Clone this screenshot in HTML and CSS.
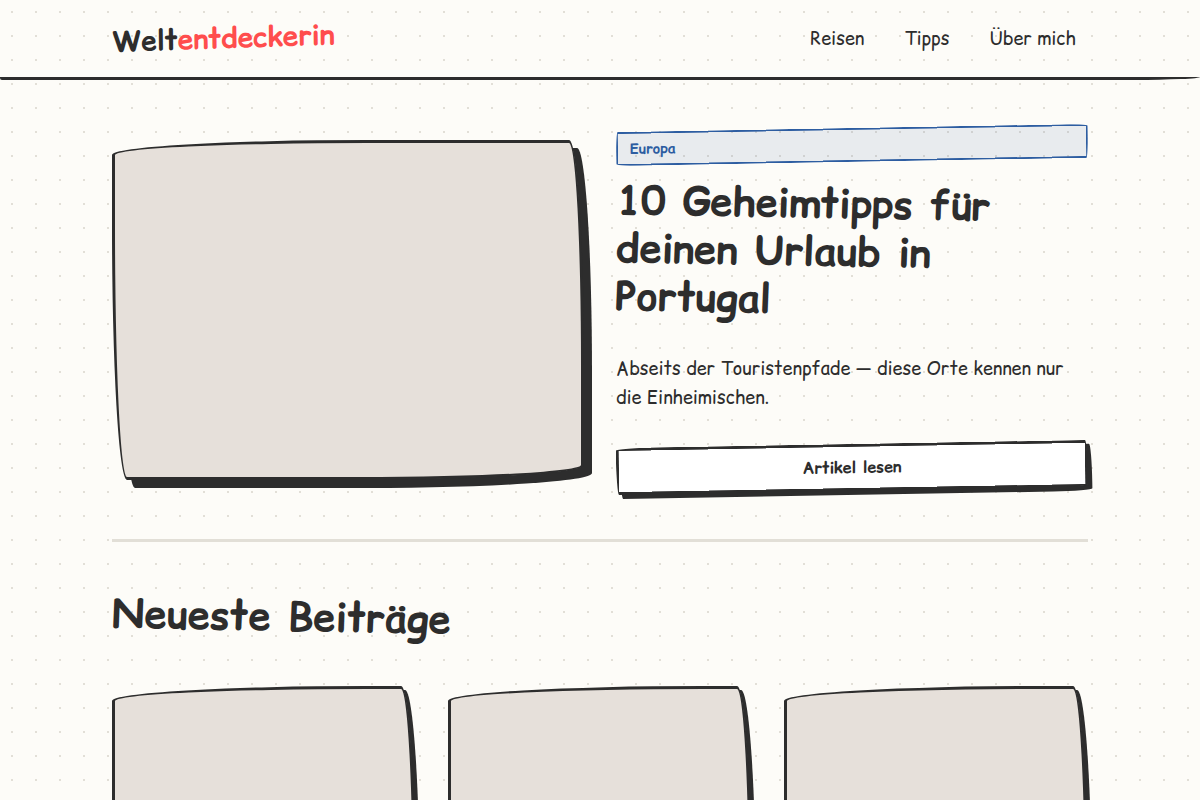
FILE: index.html
```html
<!DOCTYPE html>
<html lang="de">
<head>
    <meta charset="UTF-8">
    <meta name="viewport" content="width=device-width, initial-scale=1.0">
    <title>Weltentdeckerin</title>
    <link rel="stylesheet" href="styles.css">
</head>
<body>
    <header class="header">
        <div class="container header-inner">
            <a href="#" class="logo">Welt<span>entdeckerin</span></a>
            <nav class="nav">
                <a href="#">Reisen</a>
                <a href="#">Tipps</a>
                <a href="#">Über mich</a>
            </nav>
        </div>
    </header>
    <main class="container">
        <section class="hero">
            <div class="hero-image"></div>
            <div class="hero-text">
                <span class="badge">Europa</span>
                <h1>10 Geheimtipps für deinen Urlaub in Portugal</h1>
                <p>Abseits der Touristenpfade — diese Orte kennen nur die Einheimischen.</p>
                <button class="btn" type="button">Artikel lesen</button>
            </div>
        </section>
        <section class="posts">
            <h2>Neueste Beiträge</h2>
            <div class="grid">
                <article class="card"></article>
                <article class="card"></article>
                <article class="card"></article>
            </div>
        </section>
    </main>
</body>
</html>
```
FILE: styles.css
```css
:root {
    --bg: #fdfcf8;
    --ink: #2d2d2d;
    --muted: #e6e0da;
    --line: #e2dfd7;
    --red: #ff4d4d;
    --blue: #2d5da1;
    --wobbly: 255px 15px 225px 15px / 15px 225px 15px 255px;
    --wobbly-alt: 15px 225px 15px 255px / 225px 15px 255px 15px;
}
* {
    box-sizing: border-box;
}
body {
    margin: 0;
    font-family: "Comic Relief", "Comic Sans MS", cursive;
    font-size: 18px;
    line-height: 29px;
    color: var(--ink);
    background-color: var(--bg);
    background-image: radial-gradient(var(--line) 1px, transparent 1px);
    background-size: 24px 24px;
}
.container {
    max-width: 1024px;
    margin: 0 auto;
    padding: 0 24px;
}
.header {
    border-bottom: 3px solid var(--ink);
    border-radius: 0 0 66px 2px / 0 0 3px 2px;
}
.header-inner {
    display: flex;
    justify-content: space-between;
    align-items: center;
    padding-top: 16px;
    padding-bottom: 16px;
}
.logo {
    font-size: 28px;
    line-height: 45px;
    font-weight: 700;
    color: var(--ink);
    text-decoration: none;
    transform: rotate(-2deg);
}
.logo span {
    color: var(--red);
}
.nav {
    display: flex;
    gap: 16px;
}
.nav a {
    padding: 8px 12px;
    color: var(--ink);
    text-decoration: none;
}
.hero {
    display: grid;
    grid-template-columns: 1fr 1fr;
    gap: 32px;
    align-items: center;
    padding: 48px 0;
    border-bottom: 3px solid var(--line);
}
.hero-image {
    height: 340px;
    background: var(--muted);
    border: 3px solid var(--ink);
    border-radius: var(--wobbly);
    box-shadow: 8px 8px 0 var(--ink);
}
.hero-text {
    display: flex;
    flex-direction: column;
    gap: 16px;
}
.badge {
    padding: 4px 12px;
    font-size: 14px;
    line-height: 22px;
    font-weight: 700;
    color: var(--blue);
    background: rgba(45, 93, 161, 0.1);
    border: 2px solid var(--blue);
    border-radius: var(--wobbly-alt);
    transform: rotate(-1deg);
}
h1, h2 {
    margin: 0;
    font-size: 40px;
    font-weight: 700;
    transform: rotate(1deg);
}
h1 {
    margin-top: 2px;
    line-height: 48px;
}
h2 {
    margin-bottom: 32px;
    line-height: 64px;
}
.hero-text p {
    margin: 14px 0 16px;
}
.btn {
    padding: 8px 24px;
    font-family: inherit;
    font-size: 16px;
    line-height: 25px;
    font-weight: 700;
    color: var(--ink);
    background: #fff;
    border: 3px solid var(--ink);
    border-radius: var(--wobbly);
    box-shadow: 4px 4px 0 var(--ink);
    transform: rotate(-1deg);
    cursor: pointer;
}
.posts {
    padding: 48px 0;
}
.grid {
    display: grid;
    grid-template-columns: repeat(3, 1fr);
    gap: 32px;
}
.card {
    height: 400px;
    background: var(--muted);
    border: 3px solid var(--ink);
    border-radius: var(--wobbly);
    box-shadow: 4px 4px 0 var(--ink);
}
```
